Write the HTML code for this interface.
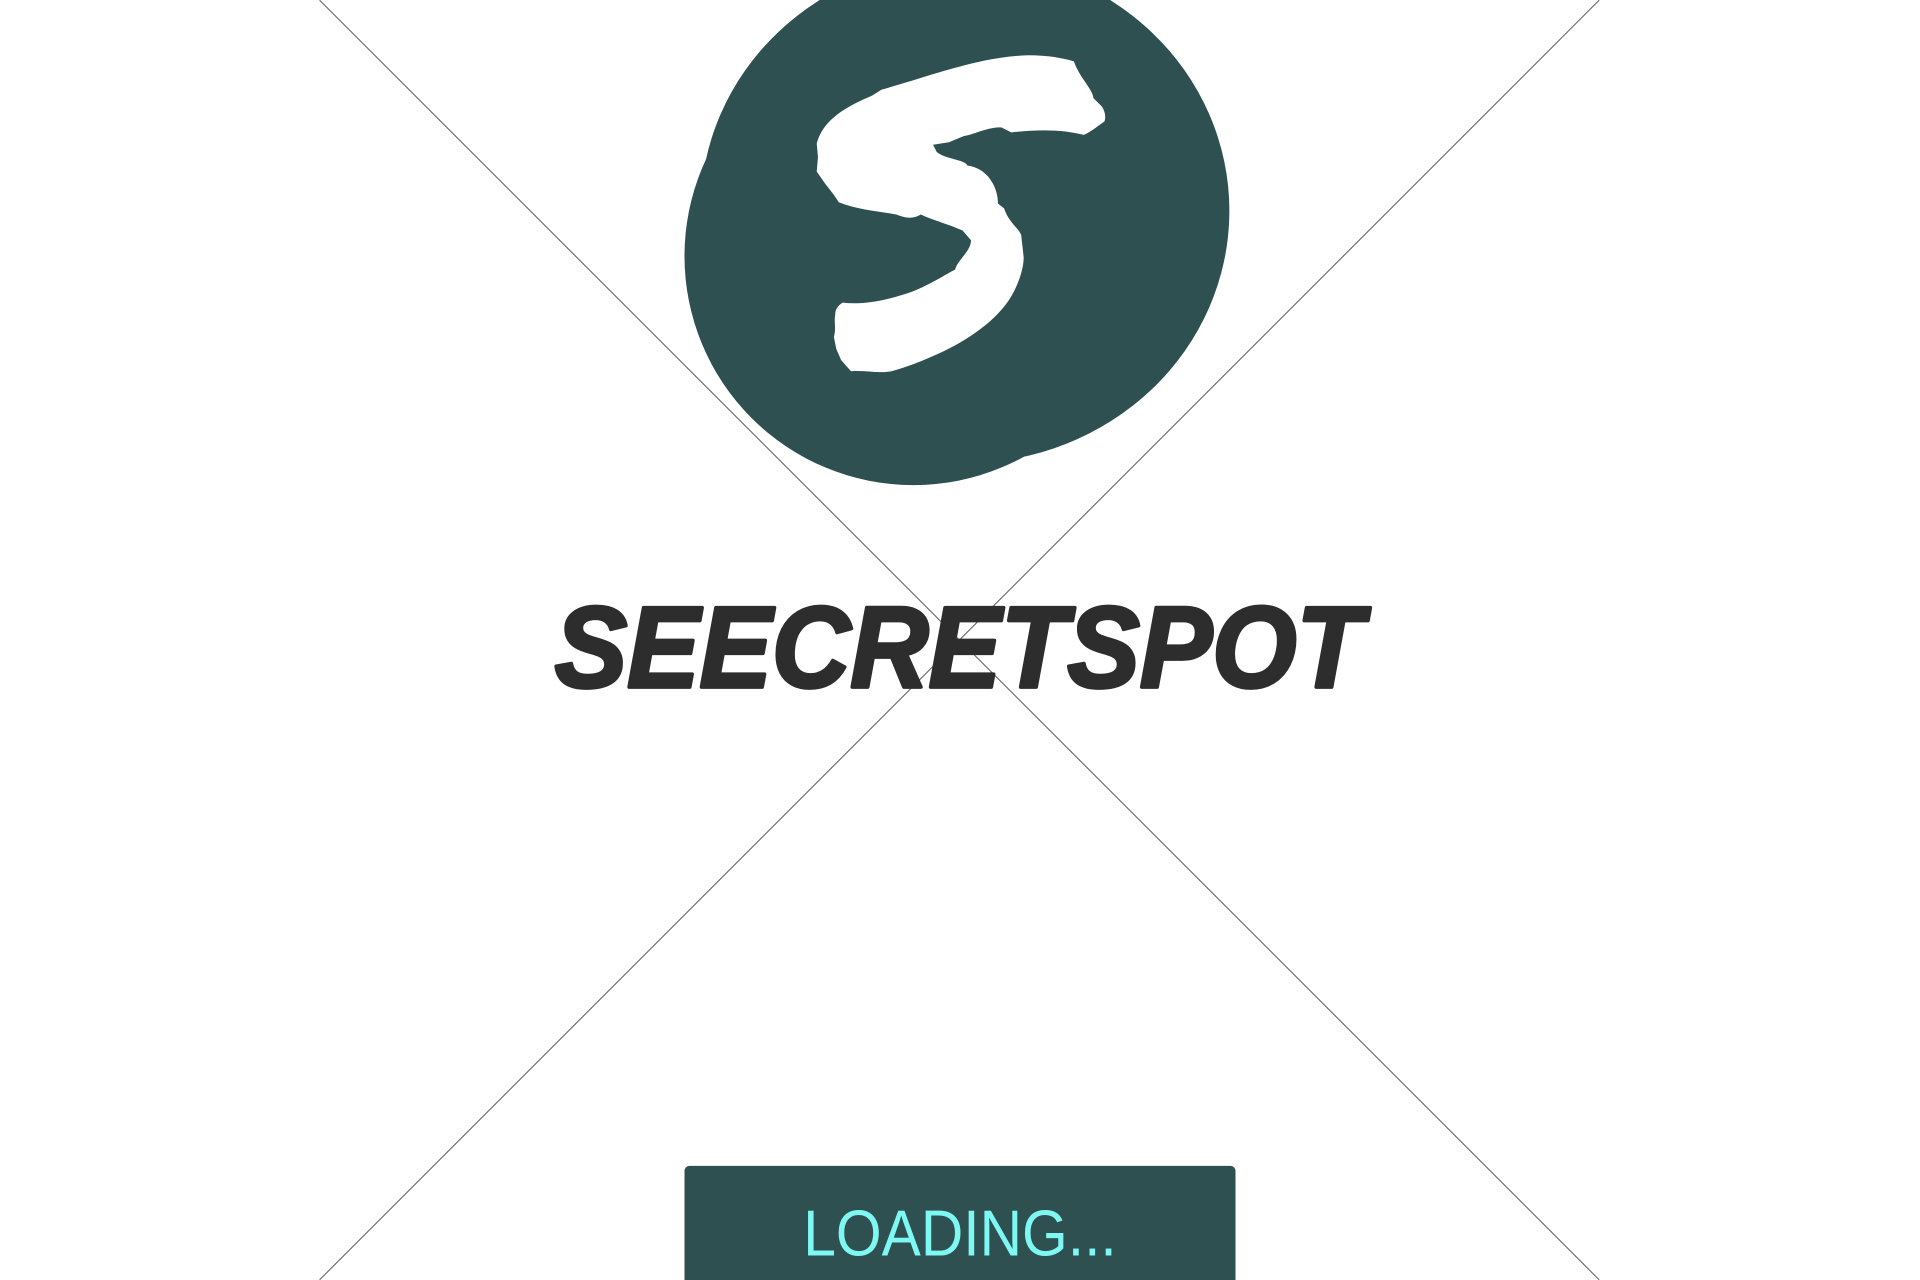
<!DOCTYPE html>
<html><head><meta charset="utf-8"><style>
html,body{margin:0;padding:0;background:#fff;width:1920px;height:1280px;overflow:hidden}
svg{display:block}
</style></head><body>
<svg width="1920" height="1280" viewBox="0 0 1568 1045" xmlns="http://www.w3.org/2000/svg">
<rect width="1568" height="1045" fill="#fff"/>
<line x1="261" y1="0" x2="1306" y2="1045" stroke="#555" stroke-width="0.8"/>
<line x1="1306" y1="0" x2="261" y2="1045" stroke="#555" stroke-width="0.8"/>
<ellipse cx="788" cy="172" rx="216" ry="206" fill="#2f5050"/>
<circle cx="746" cy="209" r="187" fill="#2f5050"/>
<path fill="#fff" d="M720,73 C760,62 800,46 840,45 C855,45 867,47 877,50 C882,64 892,72 893,80 L900,87 C903,92 903,96 902,99 C895,104 890,108 885,110 C870,106 850,105 826,108 L818,104 C808,103 795,110 787,111 L775,116 L762,118 L765,124 C772,130 788,130 790,135 C806,137 815,152 815,166 L820,170 C824,182 832,186 834,192 L836,210 C836,218 833,228 828,238 C818,258 795,275 770,287 C755,294 740,300 728,303 C718,305 705,302 695,303 L687,294 L683,285 L681,275 C683,268 681,262 682,258 C682,252 684,250 688,247 C705,249 725,245 745,238 C760,232 772,224 780,220 C782,212 793,205 793,196 L786,188 C772,182 760,179 752,175 C745,179 740,178 732,175 C715,172 700,171 685,165 L681,159 L674,150 L667,140 L668,128 L667,117 C671,102 683,90 712,78 Z"/>
<text x="453" y="561" font-family="Liberation Sans, sans-serif" font-weight="bold" font-style="italic" font-size="94" fill="#2d2d2d" stroke="#2d2d2d" stroke-width="3" stroke-linejoin="round" textLength="660" lengthAdjust="spacingAndGlyphs">SEECRETSPOT</text>
<rect x="559" y="952" width="450" height="120" rx="4" fill="#2f5050"/>
<text x="656" y="1025" font-family="Liberation Sans Narrow, Liberation Sans, sans-serif" font-size="53" fill="#7ef8f3" textLength="256" lengthAdjust="spacingAndGlyphs">LOADING...</text>
</svg>
</body></html>
